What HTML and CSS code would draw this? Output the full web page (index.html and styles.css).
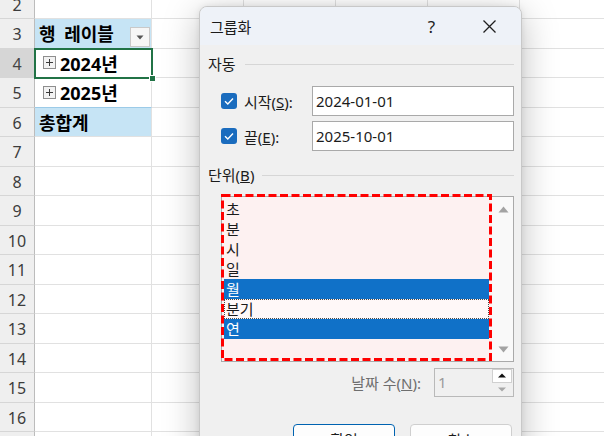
FILE: index.html
```html
<!DOCTYPE html>
<html lang="ko">
<head>
<meta charset="utf-8">
<title>그룹화</title>
<link rel="stylesheet" href="styles.css">
</head>
<body>
<div class="sheet">
  <div class="row"><div class="rh">2</div><div class="c a"></div><div class="c"></div><div class="c"></div><div class="c"></div><div class="c"></div><div class="c"></div></div>
  <div class="row"><div class="rh">3</div><div class="c a band"><span class="lbl">행 레이블</span><span class="dd"><svg width="8" height="5" viewBox="0 0 8 5"><path d="M0.5 0.5h7L4 4.5z" fill="#555"/></svg></span></div><div class="c"></div><div class="c"></div><div class="c"></div><div class="c"></div><div class="c"></div></div>
  <div class="row"><div class="rh sel-h">4</div><div class="c a cur"><svg class="exp" width="13" height="13" viewBox="0 0 13 13"><rect x="0.5" y="0.5" width="12" height="12" fill="#f2f2f2" stroke="#8e8e8e"/><path d="M3 6.5h7M6.5 3v7" stroke="#3a3a3a" stroke-width="1"/></svg><span>2024년</span><span class="selbox"><span class="handle"></span></span></div><div class="c"></div><div class="c"></div><div class="c"></div><div class="c"></div><div class="c"></div></div>
  <div class="row"><div class="rh">5</div><div class="c a pre-band"><svg class="exp" width="13" height="13" viewBox="0 0 13 13"><rect x="0.5" y="0.5" width="12" height="12" fill="#f2f2f2" stroke="#8e8e8e"/><path d="M3 6.5h7M6.5 3v7" stroke="#3a3a3a" stroke-width="1"/></svg><span>2025년</span></div><div class="c"></div><div class="c"></div><div class="c"></div><div class="c"></div><div class="c"></div></div>
  <div class="row"><div class="rh">6</div><div class="c a band"><span class="lbl">총합계</span></div><div class="c"></div><div class="c"></div><div class="c"></div><div class="c"></div><div class="c"></div></div>
  <div class="row"><div class="rh">7</div><div class="c a"></div><div class="c"></div><div class="c"></div><div class="c"></div><div class="c"></div><div class="c"></div></div>
  <div class="row"><div class="rh">8</div><div class="c a"></div><div class="c"></div><div class="c"></div><div class="c"></div><div class="c"></div><div class="c"></div></div>
  <div class="row"><div class="rh">9</div><div class="c a"></div><div class="c"></div><div class="c"></div><div class="c"></div><div class="c"></div><div class="c"></div></div>
  <div class="row"><div class="rh">10</div><div class="c a"></div><div class="c"></div><div class="c"></div><div class="c"></div><div class="c"></div><div class="c"></div></div>
  <div class="row"><div class="rh">11</div><div class="c a"></div><div class="c"></div><div class="c"></div><div class="c"></div><div class="c"></div><div class="c"></div></div>
  <div class="row"><div class="rh">12</div><div class="c a"></div><div class="c"></div><div class="c"></div><div class="c"></div><div class="c"></div><div class="c"></div></div>
  <div class="row"><div class="rh">13</div><div class="c a"></div><div class="c"></div><div class="c"></div><div class="c"></div><div class="c"></div><div class="c"></div></div>
  <div class="row"><div class="rh">14</div><div class="c a"></div><div class="c"></div><div class="c"></div><div class="c"></div><div class="c"></div><div class="c"></div></div>
  <div class="row"><div class="rh">15</div><div class="c a"></div><div class="c"></div><div class="c"></div><div class="c"></div><div class="c"></div><div class="c"></div></div>
  <div class="row"><div class="rh">16</div><div class="c a"></div><div class="c"></div><div class="c"></div><div class="c"></div><div class="c"></div><div class="c"></div></div>
  <div class="row"><div class="rh">17</div><div class="c a"></div><div class="c"></div><div class="c"></div><div class="c"></div><div class="c"></div><div class="c"></div></div>
</div>

<div class="dialog">
  <div class="titlebar">
    <span class="title">그룹화</span>
    <span class="tbtn help">?</span>
    <span class="tbtn close"><svg width="13" height="13" viewBox="0 0 13 13"><path d="M0.5 0.5L12.5 12.5M12.5 0.5L0.5 12.5" stroke="#1f1f1f" stroke-width="1.3"/></svg></span>
  </div>
  <div class="dbody">
    <div class="ghead"><span>자동</span><span class="gline"></span></div>
    <div class="frow first">
      <div class="flbl"><span class="chk"><svg width="16" height="16" viewBox="0 0 16 16"><path d="M4 8.2l2.8 2.8L12 5.6" fill="none" stroke="#fff" stroke-width="1.4"/></svg></span><span>시작(<u>S</u>):</span></div>
      <div class="inp">2024-01-01</div>
    </div>
    <div class="frow">
      <div class="flbl"><span class="chk"><svg width="16" height="16" viewBox="0 0 16 16"><path d="M4 8.2l2.8 2.8L12 5.6" fill="none" stroke="#fff" stroke-width="1.4"/></svg></span><span>끝(<u>E</u>):</span></div>
      <div class="inp">2025-10-01</div>
    </div>
    <div class="ghead unit"><span>단위(<u>B</u>)</span><span class="gline"></span></div>
    <div class="listbox">
      <div class="items">
        <div class="item">초</div>
        <div class="item">분</div>
        <div class="item">시</div>
        <div class="item">일</div>
        <div class="item on">월</div>
        <div class="item focus">분기</div>
        <div class="item on">연</div>
      </div>
      <div class="vscroll">
        <svg width="11" height="7" viewBox="0 0 11 7"><path d="M0.5 6.5L5.5 0.5L10.5 6.5z" fill="#a3a3a3"/></svg>
        <svg width="11" height="7" viewBox="0 0 11 7"><path d="M0.5 0.5L5.5 6.5L10.5 0.5z" fill="#a3a3a3"/></svg>
      </div>
      <svg class="mark" width="272" height="168" viewBox="0 0 272 168"><rect x="1.5" y="1.5" width="268" height="164" fill="none" stroke="#ff0000" stroke-width="3" stroke-dasharray="8 3.5"/></svg>
    </div>
    <div class="nrow">
      <span class="nlbl">날짜 수(<u>N</u>):</span>
      <div class="spin">
        <span class="sval">1</span>
        <span class="sbtns">
          <span class="sb up"><svg width="8" height="5" viewBox="0 0 8 5"><path d="M0 4.5L4 0.5L8 4.5z" fill="#111"/></svg></span>
          <span class="sb dn"><svg width="8" height="5" viewBox="0 0 8 5"><path d="M0 0.5L4 4.5L8 0.5z" fill="#a8a8a8"/></svg></span>
        </span>
      </div>
    </div>
    <div class="brow">
      <span class="btn def">확인</span>
      <span class="btn">취소</span>
    </div>
  </div>
</div>
</body>
</html>
```

FILE: styles.css
```css
* { box-sizing: border-box; }
html, body { margin: 0; padding: 0; }
body {
  width: 604px;
  height: 436px;
  overflow: hidden;
  position: relative;
  background: #fff;
  font-family: "Noto Sans", "Noto Sans CJK KR", sans-serif;
  color: #1a1a1a;
}

/* ---------- sheet ---------- */
.sheet { margin-top: -10.5px; }
.row { display: flex; height: 29.5px; }
.rh {
  flex: 0 0 35px;
  background: #efefef;
  border-right: 1px solid #bcbcbc;
  border-bottom: 1px solid #d6d6d6;
  font-size: 16px;
  line-height: 30px;
  color: #3c3c3c;
  text-align: center;
}
.rh.sel-h { background: #d6d6d6; color: #444; }
.c {
  flex: 0 0 92px;
  border-right: 1px solid #e1e1e1;
  border-bottom: 1px solid #e1e1e1;
}
.c.a {
  flex-basis: 117px;
  display: flex;
  align-items: center;
  font-weight: 700;
  font-size: 18px;
  color: #000;
  padding-left: 8px;
  white-space: nowrap;
}
.c.a.band {
  background: #c6e4f5;
  padding-left: 4px;
  justify-content: space-between;
  padding-right: 1px;
}
.c.a.pre-band { border-bottom-color: #9ccbe8; }
.lbl { word-spacing: 4px; }
.dd {
  align-self: flex-end;
  width: 20px;
  height: 20px;
  margin-bottom: 0.5px;
  background: #f6f6f6;
  border: 1px solid #c9c9c9;
  display: flex;
  align-items: center;
  justify-content: center;
}
.exp { margin-right: 4px; flex: 0 0 auto; }
.cur { position: relative; }
.selbox {
  position: absolute;
  left: -1px;
  top: -1px;
  right: -2px;
  bottom: -2px;
  border: 2px solid #217346;
}
.handle {
  position: absolute;
  right: -5px;
  bottom: -5px;
  width: 7px;
  height: 7px;
  background: #217346;
  border: 1px solid #fff;
}

/* ---------- dialog ---------- */
.dialog {
  position: absolute;
  left: 199px;
  top: 6px;
  width: 323px;
  height: 470px;
  background: #f0f0f0;
  border: 1px solid #c8c8c8;
  border-radius: 8px;
  box-shadow: 0 8px 36px rgba(0, 0, 0, 0.26), 0 0 6px rgba(0, 0, 0, 0.08);
  overflow: hidden;
  font-size: 15px;
  color: #1b1b1b;
}
.titlebar {
  height: 38px;
  background: #eef2f8;
  display: flex;
  align-items: center;
  padding-left: 10px;
  padding-right: 2px;
}
.title { flex: 1; }
.tbtn {
  width: 59px;
  height: 38px;
  display: flex;
  align-items: center;
  justify-content: center;
}
.help { font-size: 17px; color: #222; padding-left: 2px; }

.dbody { padding: 0 7px 0 8px; }
.ghead {
  display: flex;
  align-items: center;
  height: 20px;
  line-height: 20px;
  margin-top: 9px;
}
.gline { flex: 1; border-top: 1px solid #d6d6d6; margin-left: 9px; margin-top: 1px; }
.ghead.unit { margin-top: 14px; }
.ghead.unit .gline { margin-left: 8px; }

.frow { display: flex; align-items: center; margin-top: 5px; padding-left: 13px; height: 30px; }
.frow.first { margin-top: 12px; }
.flbl { flex: 0 0 91px; display: flex; align-items: center; gap: 7px; }
.chk {
  width: 16px;
  height: 16px;
  border-radius: 3px;
  background: #1a6cbe;
  display: flex;
}
.inp {
  flex: 1;
  height: 30px;
  background: #fff;
  border: 1px solid #a9a9a9;
  line-height: 28px;
  padding-left: 3px;
}

.listbox {
  position: relative;
  margin: 11px 0 0 13px;
  height: 166px;
  border: 1px solid #a9a9a9;
  background: #f9f9f9;
  display: flex;
}
.items {
  flex: 0 0 270px;
  background: #fdf1f1;
  padding: 2px 3px 0 2px;
}
.item { height: 20px; line-height: 20px; padding-left: 2px; }
.item.on { background: #1071c8; color: #fff; }
.item.focus { border: 1px dotted #4a4a4a; line-height: 18px; padding-left: 1px; background: #fff8f8; }
.vscroll {
  flex: 1;
  display: flex;
  flex-direction: column;
  align-items: center;
  justify-content: space-between;
  padding: 9px 0 8px 1px;
}
.mark { position: absolute; left: -1px; top: -3px; }

.nrow {
  display: flex;
  justify-content: flex-end;
  align-items: center;
  margin-top: 6px;
  height: 29px;
  gap: 13px;
}
.nlbl { color: #6e6e6e; }
.spin {
  width: 80px;
  height: 29px;
  border: 1px solid #b9b9b9;
  background: #f0f0f0;
  display: flex;
  justify-content: space-between;
  padding: 0 1px 0 3px;
}
.sval { color: #9a9a9a; line-height: 26px; }
.sbtns { display: flex; flex-direction: column; width: 20px; padding-top: 0; }
.sb { height: 13.5px; display: flex; align-items: center; justify-content: center; }
.sb.up { background: #fff; border: 1px solid #d0d0d0; }

.brow {
  display: flex;
  justify-content: flex-end;
  gap: 15px;
  margin-top: 27px;
  padding-right: 2px;
}
.btn {
  width: 102px;
  height: 32px;
  border: 1px solid #cfcfcf;
  border-radius: 4px;
  background: #fdfdfd;
  text-align: center;
  line-height: 30px;
}
.btn.def { border: 1px solid #0063b1; }
```
